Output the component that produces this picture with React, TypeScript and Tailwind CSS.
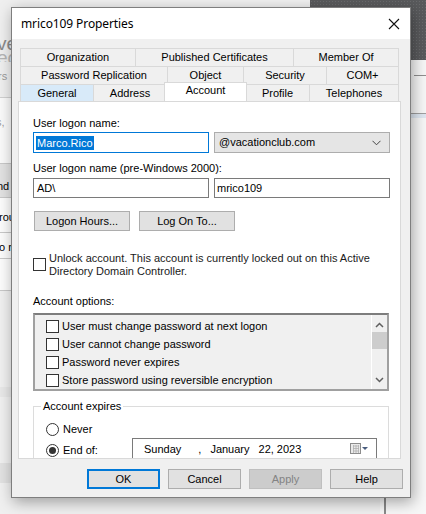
import React from 'react';

const Check = ({ className = '' }: { className?: string }) => (
  <span className={`inline-block w-[13px] h-[13px] border border-[#333] bg-white shrink-0 ${className}`} />
);

const Radio = ({ on = false }: { on?: boolean }) => (
  <span className="w-[13px] h-[13px] rounded-full border border-[#333] bg-white flex items-center justify-center shrink-0">
    {on && <span className="w-[7px] h-[7px] rounded-full bg-[#333]" />}
  </span>
);

const Tab = ({ label, w, active = false, hover = false, last = false }: { label: string; w: number; active?: boolean; hover?: boolean; last?: boolean }) => (
  <div
    style={{ width: w }}
    className={`flex items-center justify-center border-t border-l border-[#d9d9d9] ${last ? 'border-r' : ''} ${
      hover ? 'bg-[#d8eaf9]' : 'bg-[#f0f0f0]'
    } ${active ? 'relative z-10 bg-white -mt-[2px] -mx-[2px] pb-[3px] border-r' : ''}`}
  >
    {label}
  </div>
);

const Btn = ({ label, w = 73, primary = false, disabled = false }: { label: string; w?: number; primary?: boolean; disabled?: boolean }) => (
  <div
    style={{ width: w }}
    className={`h-[20px] flex items-center justify-center ${
      primary ? 'border-2 border-[#0078d7] bg-[#e1e1e1]' : disabled ? 'border border-[#bfbfbf] bg-[#cccccc] text-[#838383]' : 'border border-[#adadad] bg-[#e1e1e1]'
    }`}
  >
    {label}
  </div>
);

export default function App() {
  return (
    <div className="relative w-[426px] h-[514px] overflow-hidden bg-[#f0f0f0] font-['Liberation_Sans',Arial,sans-serif] text-[11px] text-black">
      {/* background window fragments */}
      <div className="absolute left-0 top-0 w-[40px] h-[97px] bg-[#efefef]" />
      <span className="absolute left-[-3px] top-[36px] text-[19px] leading-[16px] text-[#8a8a8a]">ve</span>
      <span className="absolute left-[-3px] top-[53px] text-[19px] leading-[9px] h-[9px] overflow-hidden text-[#b5b5b5]">ec</span>
      <span className="absolute left-[-8px] top-[70px] leading-[13px] text-[#9a9a9a]">ers</span>
      <div className="absolute left-0 top-[97px] w-[40px] h-px bg-[#d0d0d0]" />
      <div className="absolute left-0 top-[98px] w-[40px] h-[65px] bg-[#fafafa]" />
      <span className="absolute left-[-4px] top-[114px] text-[#9a9a9a]">s,</span>
      <div className="absolute left-0 top-[163px] w-[40px] h-[35px] bg-[#e2e2e2] border-y border-[#c8c8c8]" />
      <span className="absolute left-[-3px] top-[178px] text-black">nd</span>
      <div className="absolute left-0 top-[198px] w-[40px] h-[92px] bg-[#fcfcfc]" />
      <span className="absolute left-[-1px] top-[209px]">rou</span>
      <div className="absolute left-0 top-[232px] w-[40px] h-px bg-[#c8c8c8]" />
      <span className="absolute left-[-1px] top-[239px]">o r</span>
      <div className="absolute left-0 top-[258px] w-[40px] h-px bg-[#c8c8c8]" />
      <div className="absolute left-0 top-[290px] w-[40px] h-px bg-[#c8c8c8]" />
      <div className="absolute left-0 top-[387px] w-[40px] h-[10px] bg-[#e8e8e8]" />
      <div className="absolute left-0 top-[463px] w-[40px] h-[20px] bg-[#e2e2e2]" />
      <div className="absolute left-[310px] top-0 w-[116px] h-[60px] bg-[#595a5c] bg-[radial-gradient(#6a6b6d_1px,transparent_1px)] bg-[length:3px_3px]" />
      <div className="absolute left-[380px] top-[60px] w-[46px] h-[454px] bg-[#f7f7f7]" />
      <div className="absolute left-[414px] top-[75px] w-[12px] h-px bg-[#8f8f8f]" />
      <div className="absolute left-[400px] top-[113px] w-[26px] h-px bg-[#a0a0a0]" />
      <div className="absolute left-[400px] top-[114px] w-[26px] h-[4px] bg-[#dfe8f2]" />
      <div className="absolute left-[384px] top-[490px] w-[2px] h-[24px] bg-[#8a8a8a]" />

      {/* dialog */}
      <div className="absolute left-[11px] top-[7px] w-[400px] h-[491px] flex flex-col bg-[#f0f0f0] border border-[#7e7e7e] shadow-[2px_4px_14px_rgba(0,0,0,0.35)]">
        <div className="h-[31px] bg-white flex items-center justify-between pl-[9px] pr-[10px] shrink-0">
          <span className="text-[12px] font-['Noto_Sans',sans-serif] tracking-[-0.1px] mt-[1px]">mrico109 Properties</span>
          <svg width="12" height="12" viewBox="0 0 12 12" className="mt-[1px]">
            <path d="M1 1L11 11M11 1L1 11" stroke="#111" strokeWidth="1.1" />
          </svg>
        </div>

        <div className="pt-[9px] pl-[6px]">
          <div className="ml-[2px] w-[379px] flex flex-col">
            <div className="flex h-[18px]">
              <Tab label="Organization" w={115} />
              <Tab label="Published Certificates" w={158} />
              <Tab label="Member Of" w={106} last />
            </div>
            <div className="flex h-[18px]">
              <Tab label="Password Replication" w={147} />
              <Tab label="Object" w={76} />
              <Tab label="Security" w={83} />
              <Tab label="COM+" w={73} last />
            </div>
            <div className="flex h-[17px]">
              <Tab label="General" w={73} hover />
              <Tab label="Address" w={73} />
              <Tab label="Account" w={83} active />
              <Tab label="Profile" w={64} />
              <Tab label="Telephones" w={90} last />
            </div>
          </div>

          {/* panel */}
          <div className="w-[383px] h-[358px] bg-white border border-[#d9d9d9] overflow-hidden pl-[14px] pr-[10px]">
            <div className="mt-[14px] h-[14px] leading-[14px]">User logon name:</div>
            <div className="mt-[2px] flex gap-[5px] h-[21px]">
              <div className="w-[176px] border border-[#0078d7] flex items-center pl-[2px]">
                <span className="bg-[#0078d7] text-white px-[1px] leading-[14px]">Marco.Rico</span>
              </div>
              <div className="w-[176px] border border-[#adadad] bg-[#e5e5e5] flex items-center justify-between pl-[4px] pr-[8px]">
                <span>@vacationclub.com</span>
                <svg width="9" height="6" viewBox="0 0 9 6">
                  <path d="M0.5 0.8L4.5 4.8L8.5 0.8" stroke="#444" fill="none" strokeWidth="1" />
                </svg>
              </div>
            </div>
            <div className="mt-[8px] h-[14px] leading-[14px]">User logon name (pre-Windows 2000):</div>
            <div className="mt-[3px] flex gap-[5px] h-[20px]">
              <div className="w-[176px] border border-[#7a7a7a] flex items-center pl-[3px]">AD\</div>
              <div className="w-[176px] border border-[#7a7a7a] flex items-center pl-[2px]">mrico109</div>
            </div>
            <div className="mt-[13px] flex gap-[9px] ml-px">
              <Btn label="Logon Hours..." w={96} />
              <Btn label="Log On To..." w={96} />
            </div>
            <div className="mt-[21px] flex items-start gap-[3px]">
              <Check className="mt-[6px]" />
              <div className="leading-[13px] text-[#1a1a1a]">
                Unlock account. This account is currently locked out on this Active
                <br />
                Directory Domain Controller.
              </div>
            </div>
            <div className="mt-[16px] h-[14px] leading-[14px]">Account options:</div>
            <div className="mt-[5px] w-[356px] h-[78px] border-2 border-[#a0a0a0] border-t-[#7d7d7d] bg-[#f0f0f0] flex">
              <div className="flex-1 flex flex-col pl-[11px] pt-[2px]">
                {[
                  'User must change password at next logon',
                  'User cannot change password',
                  'Password never expires',
                  'Store password using reversible encryption',
                ].map((t) => (
                  <div key={t} className="h-[18px] flex items-center gap-[3px]">
                    <Check className="bg-[#f4f4f4]" />
                    <span>{t}</span>
                  </div>
                ))}
              </div>
              <div className="w-[16px] border-l border-white flex flex-col items-center">
                <svg width="9" height="6" viewBox="0 0 9 6" className="mt-[7px]">
                  <path d="M1 5L4.5 1.5L8 5" stroke="#606060" fill="none" strokeWidth="1.5" />
                </svg>
                <div className="mt-[4px] w-[15px] h-[17px] bg-[#cdcdcd]" />
                <div className="flex-1" />
                <svg width="9" height="6" viewBox="0 0 9 6" className="mb-[6px]">
                  <path d="M1 1L4.5 4.5L8 1" stroke="#606060" fill="none" strokeWidth="1.5" />
                </svg>
              </div>
            </div>
            <div className="mt-[15px] w-[356px] h-[80px] border border-[#dcdcdc] relative pl-[12px] pt-[14px]">
              <span className="absolute left-[7px] top-[-8px] bg-white px-[2px] leading-[14px]">Account expires</span>
              <div className="flex items-center gap-[4px] h-[16px]">
                <Radio />
                <span>Never</span>
              </div>
              <div className="mt-[5px] flex items-center h-[16px]">
                <Radio on />
                <span className="ml-[4px]">End of:</span>
              </div>
              <div className="absolute left-[98px] top-[31px] w-[245px] h-[22px] border border-[#7a7a7a] flex items-center pl-[11px] pr-[7px]">
                <span>Sunday</span>
                <span className="ml-[17px]">,</span>
                <span className="ml-[9px]">January</span>
                <span className="ml-[9px]">22, 2023</span>
                <div className="flex-1" />
                <svg width="19" height="12" viewBox="0 0 19 12">
                  <rect x="0.5" y="0.5" width="10" height="10" fill="#eaeaea" stroke="#8c8c8c" />
                  <path d="M3 3h6M3 5.5h6M3 8h6M3.5 2v8M6 2v8M8.5 2v8" stroke="#b0b0b0" strokeWidth="0.8" />
                  <path d="M12 4h6L15 7z" fill="#4a5d7e" />
                </svg>
              </div>
            </div>
          </div>
        </div>

        <div className="mt-[10px] flex justify-end gap-[8px] pr-[7px]">
          <Btn label="OK" primary />
          <Btn label="Cancel" />
          <Btn label="Apply" disabled />
          <Btn label="Help" />
        </div>
      </div>
    </div>
  );
}
